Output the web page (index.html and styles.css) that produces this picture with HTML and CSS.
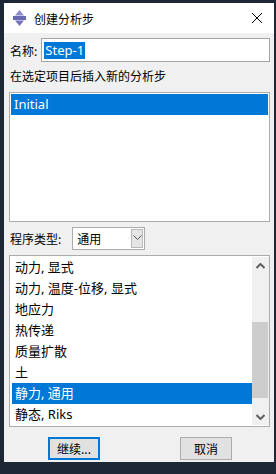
FILE: index.html
```html
<!DOCTYPE html>
<html>
<head>
<meta charset="utf-8">
<meta name="viewport" content="width=device-width, initial-scale=1.0">
<link rel="stylesheet" href="styles.css">
</head>
<body>
  <div class="dialog">
    <div class="titlebar">
      <svg class="app-icon" width="13" height="16" viewBox="0 0 13 16">
        <polygon points="6.5,0 11,5.5 2,5.5" fill="#8d8dd0"/>
        <rect x="0" y="6" width="13" height="4" fill="#6a6ab4"/>
        <polygon points="2,10.5 11,10.5 6.5,16" fill="#7474bc"/>
      </svg>
      <span class="title">创建分析步</span>
      <svg class="close" width="12" height="12" viewBox="0 0 12 12">
        <path d="M1 1 L11 11 M11 1 L1 11" stroke="#000" stroke-width="1"/>
      </svg>
    </div>

    <div class="content">
      <div class="name-row">
        <span class="label">名称:</span>
        <div class="textbox"><span class="sel-text">Step-1</span></div>
      </div>

      <div class="hint">在选定项目后插入新的分析步</div>

      <div class="listbox list-steps">
        <div class="item selected">Initial</div>
      </div>

      <div class="type-row">
        <span class="label">程序类型:</span>
        <div class="combo">
          <span class="combo-text">通用</span>
          <div class="combo-btn">
            <svg width="9" height="6" viewBox="0 0 9 6"><path d="M0.5 0.5 L4.5 4.5 L8.5 0.5" fill="none" stroke="#555" stroke-width="1"/></svg>
          </div>
        </div>
      </div>

      <div class="listbox list-procs">
        <div class="items">
          <div class="item">动力, 显式</div>
          <div class="item">动力, 温度-位移, 显式</div>
          <div class="item">地应力</div>
          <div class="item">热传递</div>
          <div class="item">质量扩散</div>
          <div class="item">土</div>
          <div class="item selected">静力, 通用</div>
          <div class="item">静态, Riks</div>
        </div>
        <div class="scrollbar">
          <div class="sb-arrow">
            <svg width="9" height="6" viewBox="0 0 9 6"><path d="M0.5 5 L4.5 1 L8.5 5" fill="none" stroke="#606060" stroke-width="2"/></svg>
          </div>
          <div class="sb-track">
            <div class="sb-thumb"></div>
          </div>
          <div class="sb-arrow">
            <svg width="9" height="6" viewBox="0 0 9 6"><path d="M0.5 1 L4.5 5 L8.5 1" fill="none" stroke="#606060" stroke-width="2"/></svg>
          </div>
        </div>
      </div>

      <div class="buttons">
        <div class="btn default">继续...</div>
        <div class="btn">取消</div>
      </div>
    </div>
  </div>
</body>
</html>
```
FILE: styles.css
```css
* {box-sizing: border-box;}

body {
  margin: 0;
  background: #1d2735;
  font-family: "Noto Sans", "Noto Sans CJK SC", sans-serif;
  font-size: 12px;
  color: #000;
}

.dialog {
  margin: 3px 0 0 4px;
  width: 270px;
  height: 459px;
  background: #f0f0f0;
  display: flex;
  flex-direction: column;
}

.titlebar {
  height: 30px;
  background: #fff;
  display: flex;
  align-items: center;
  padding: 0 11px 0 9px;
}

.app-icon {
  margin-right: 8px;
}

.title {
  flex: 1;
  font-family: "Noto Sans CJK SC", sans-serif;
  font-size: 12px;
}

.content {
  padding: 5px 4px 0 5px;
  display: flex;
  flex-direction: column;
}

.label {
  font-family: "Noto Sans CJK SC", sans-serif;
  padding-left: 1px;
}

.name-row {
  display: flex;
  align-items: center;
  height: 24px;
}

.textbox {
  margin-left: 4px;
  flex: 1;
  height: 24px;
  border: 1px solid #a5a5a5;
  background: #fff;
  display: flex;
  align-items: center;
  padding-left: 2px;
}

.sel-text {
  background: #0078d7;
  color: #fff;
  font-size: 13px;
  line-height: 17px;
  padding: 0 1px;
}

.hint {
  font-family: "Noto Sans CJK SC", sans-serif;
  height: 30px;
  padding: 5px 0 0 1px;
}

.listbox {
  border: 1px solid #acacac;
  background: #fff;
  padding: 1px;
}

.list-steps {
  height: 130px;
}

.item {
  height: 21px;
  line-height: 21px;
  padding-left: 3px;
  font-size: 13px;
  white-space: nowrap;
}

.item.selected {
  background: #0078d7;
  color: #fff;
}

.type-row {
  display: flex;
  align-items: center;
  margin-top: 5px;
  height: 22px;
}

.combo {
  margin-left: 11px;
  width: 73px;
  height: 23px;
  border: 1px solid #acacac;
  background: #fff;
  display: flex;
  align-items: center;
  padding: 1px;
}

.combo-text {
  flex: 1;
  padding-left: 3px;
  font-family: "Noto Sans CJK SC", sans-serif;
}

.combo-btn {
  width: 12px;
  height: 19px;
  background: #e5e5e5;
  border: 1px solid #b9b9b9;
  display: flex;
  align-items: center;
  justify-content: center;
}

.list-procs {
  margin-top: 6px;
  height: 172px;
  display: flex;
  padding: 1px 0 1px 1px;
}

.items {
  flex: 1;
  padding-left: 1px;
}

.scrollbar {
  width: 17px;
  background: #f0f0f0;
  display: flex;
  flex-direction: column;
}

.sb-arrow {
  height: 17px;
  display: flex;
  align-items: center;
  justify-content: center;
}

.sb-track {
  flex: 1;
  padding-top: 48px;
}

.sb-thumb {
  height: 76px;
  margin: 0 1px 0 0;
  background: #cdcdcd;
}

.buttons {
  display: flex;
  justify-content: space-between;
  padding: 0 38px 0 39px;
  margin-top: 10px;
}

.btn {
  width: 52px;
  height: 23px;
  background: #e1e1e1;
  border: 1px solid #adadad;
  display: flex;
  align-items: center;
  justify-content: center;
  font-family: "Noto Sans CJK SC", sans-serif;
}

.btn.default {
  border: 2px solid #0078d7;
}
```
